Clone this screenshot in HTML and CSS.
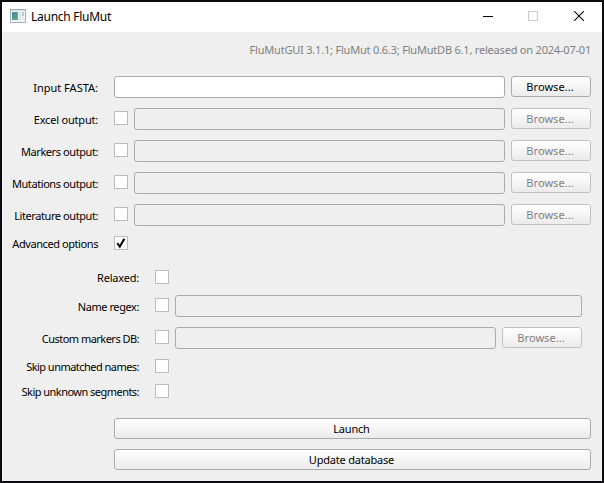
FILE: index.html
```
<!DOCTYPE html>
<html lang="en">
<head>
<meta charset="utf-8">
<title>Launch FluMut</title>
<link rel="stylesheet" href="styles.css">
</head>
<body>
<div class="window">
  <header class="titlebar">
    <svg class="app-icon" width="16" height="14" viewBox="0 0 16 14">
      <defs><linearGradient id="pane" x1="0" y1="0" x2="1" y2="1"><stop offset="0" stop-color="#4683a6"/><stop offset="1" stop-color="#65b084"/></linearGradient></defs>
      <rect x=".5" y=".5" width="15" height="13" fill="#f3f5f6" stroke="#a5adb5"/>
      <path d="M1 1.5h14" stroke="#d5dade"/>
      <rect x="2" y="3" width="6" height="8" fill="url(#pane)"/>
      <rect x="9" y="3" width="2" height="8" fill="#dde1e3"/>
      <rect x="12" y="3" width="2" height="4" fill="#a9cfcb"/>
      <rect x="12" y="7" width="2" height="4" fill="#e5e9e9"/>
    </svg>
    <h1 class="title">Launch FluMut</h1>
    <svg class="controls" width="102" height="10" viewBox="0 0 102 10" fill="none">
      <path d="M0 5.5h10" stroke="#000"/>
      <rect x="45.5" y=".5" width="9" height="9" stroke="#ccc"/>
      <path d="M91.2.2l9.6 9.6M100.8.2l-9.6 9.6" stroke="#000" stroke-width="1.1"/>
    </svg>
  </header>
  <main class="content">
    <p class="version">FluMutGUI 3.1.1; FluMut 0.6.3; FluMutDB 6.1, released on 2024-07-01</p>
    <div class="row"><label class="loose">Input FASTA:</label><span class="field active"></span><button class="browse">Browse...</button></div>
    <div class="row"><label>Excel output:</label><span class="check"></span><span class="field"></span><button class="browse" disabled>Browse...</button></div>
    <div class="row"><label class="snug">Markers output:</label><span class="check"></span><span class="field"></span><button class="browse" disabled>Browse...</button></div>
    <div class="row"><label class="snug">Mutations output:</label><span class="check"></span><span class="field"></span><button class="browse" disabled>Browse...</button></div>
    <div class="row"><label class="snug">Literature output:</label><span class="check"></span><span class="field"></span><button class="browse" disabled>Browse...</button></div>
    <div class="row toggle"><label class="snug">Advanced options</label><span class="check"><svg width="12" height="12" viewBox="0 0 12 12"><path d="M2.3 6.2L4.8 9.6 9.4 1.8" fill="none" stroke="#000" stroke-width="2"/></svg></span></div>
    <section class="advanced">
      <div class="row short"><label>Relaxed:</label><span class="check"></span></div>
      <div class="row"><label class="snug">Name regex:</label><span class="check"></span><span class="field"></span></div>
      <div class="row"><label class="tight">Custom markers DB:</label><span class="check"></span><span class="field"></span><button class="browse" disabled>Browse...</button></div>
      <div class="row short"><label class="tight">Skip unmatched names:</label><span class="check"></span></div>
      <div class="row short"><label class="tight">Skip unknown segments:</label><span class="check"></span></div>
    </section>
    <div class="actions"><button>Launch</button><button>Update database</button></div>
  </main>
</div>
</body>
</html>
```
FILE: styles.css
```
* { box-sizing: border-box; }
body {
  margin: 0;
  font: 11px/14px "Noto Sans", sans-serif;
  letter-spacing: -0.2px;
  color: #000;
}
.window {
  width: 604px;
  height: 483px;
  border: 2px solid #0c0c0e;
  background: #efefef;
}
.titlebar {
  display: flex;
  align-items: center;
  height: 30px;
  padding: 0 17px 0 8px;
  background: #fff;
}
.app-icon { margin-top: -2px; }
.title {
  flex: 1;
  margin: 0 0 0 5px;
  font: 12px/16px "Noto Sans", sans-serif;
  letter-spacing: -0.27px;
}
.controls { margin-top: -2px; }
.content { padding: 11px 11px 0 0; }
.version {
  margin: 0 0 19px;
  text-align: right;
  color: #808080;
}
.row {
  display: flex;
  align-items: flex-start;
  gap: 6px;
  height: 32px;
}
.row label {
  width: 96px;
  margin: 5px 10px 0 0;
  text-align: right;
  white-space: nowrap;
}
.row .loose { letter-spacing: 0; }
.row .snug { letter-spacing: -0.42px; }
.row .tight { letter-spacing: -0.53px; }
.check {
  flex: none;
  width: 14px;
  height: 14px;
  margin-top: 3px;
  border: 1px solid #bcbcbc;
  background: #fff;
}
.check svg { display: block; }
.field {
  flex: 1;
  height: 22px;
  border: 1px solid #ababab;
  border-radius: 3px;
}
.field.active { background: #fff; }
button {
  width: 80px;
  height: 21px;
  padding: 0;
  border: 1px solid #ababab;
  border-radius: 3px;
  background: linear-gradient(#fff, #ebebeb);
  color: #000;
  font: inherit;
  letter-spacing: inherit;
}
.browse { padding-right: 2px; letter-spacing: 0.05px; }
button:disabled { border-color: #c2c2c2; color: #808080; }
.row.toggle { height: 34px; }
.toggle label { margin-top: 1px; }
.toggle .check { margin-top: 0; }
.advanced { padding: 0 9px 0 0; }
.advanced .row label { width: 137px; }
.advanced .short { height: 25px; }
.advanced .short label { margin-top: 1px; }
.advanced .short .check { margin-top: 0; }
.actions {
  display: flex;
  flex-direction: column;
  gap: 10px;
  margin: 9px 0 0 112px;
}
.actions button { width: 100%; padding-right: 2px; }
```
